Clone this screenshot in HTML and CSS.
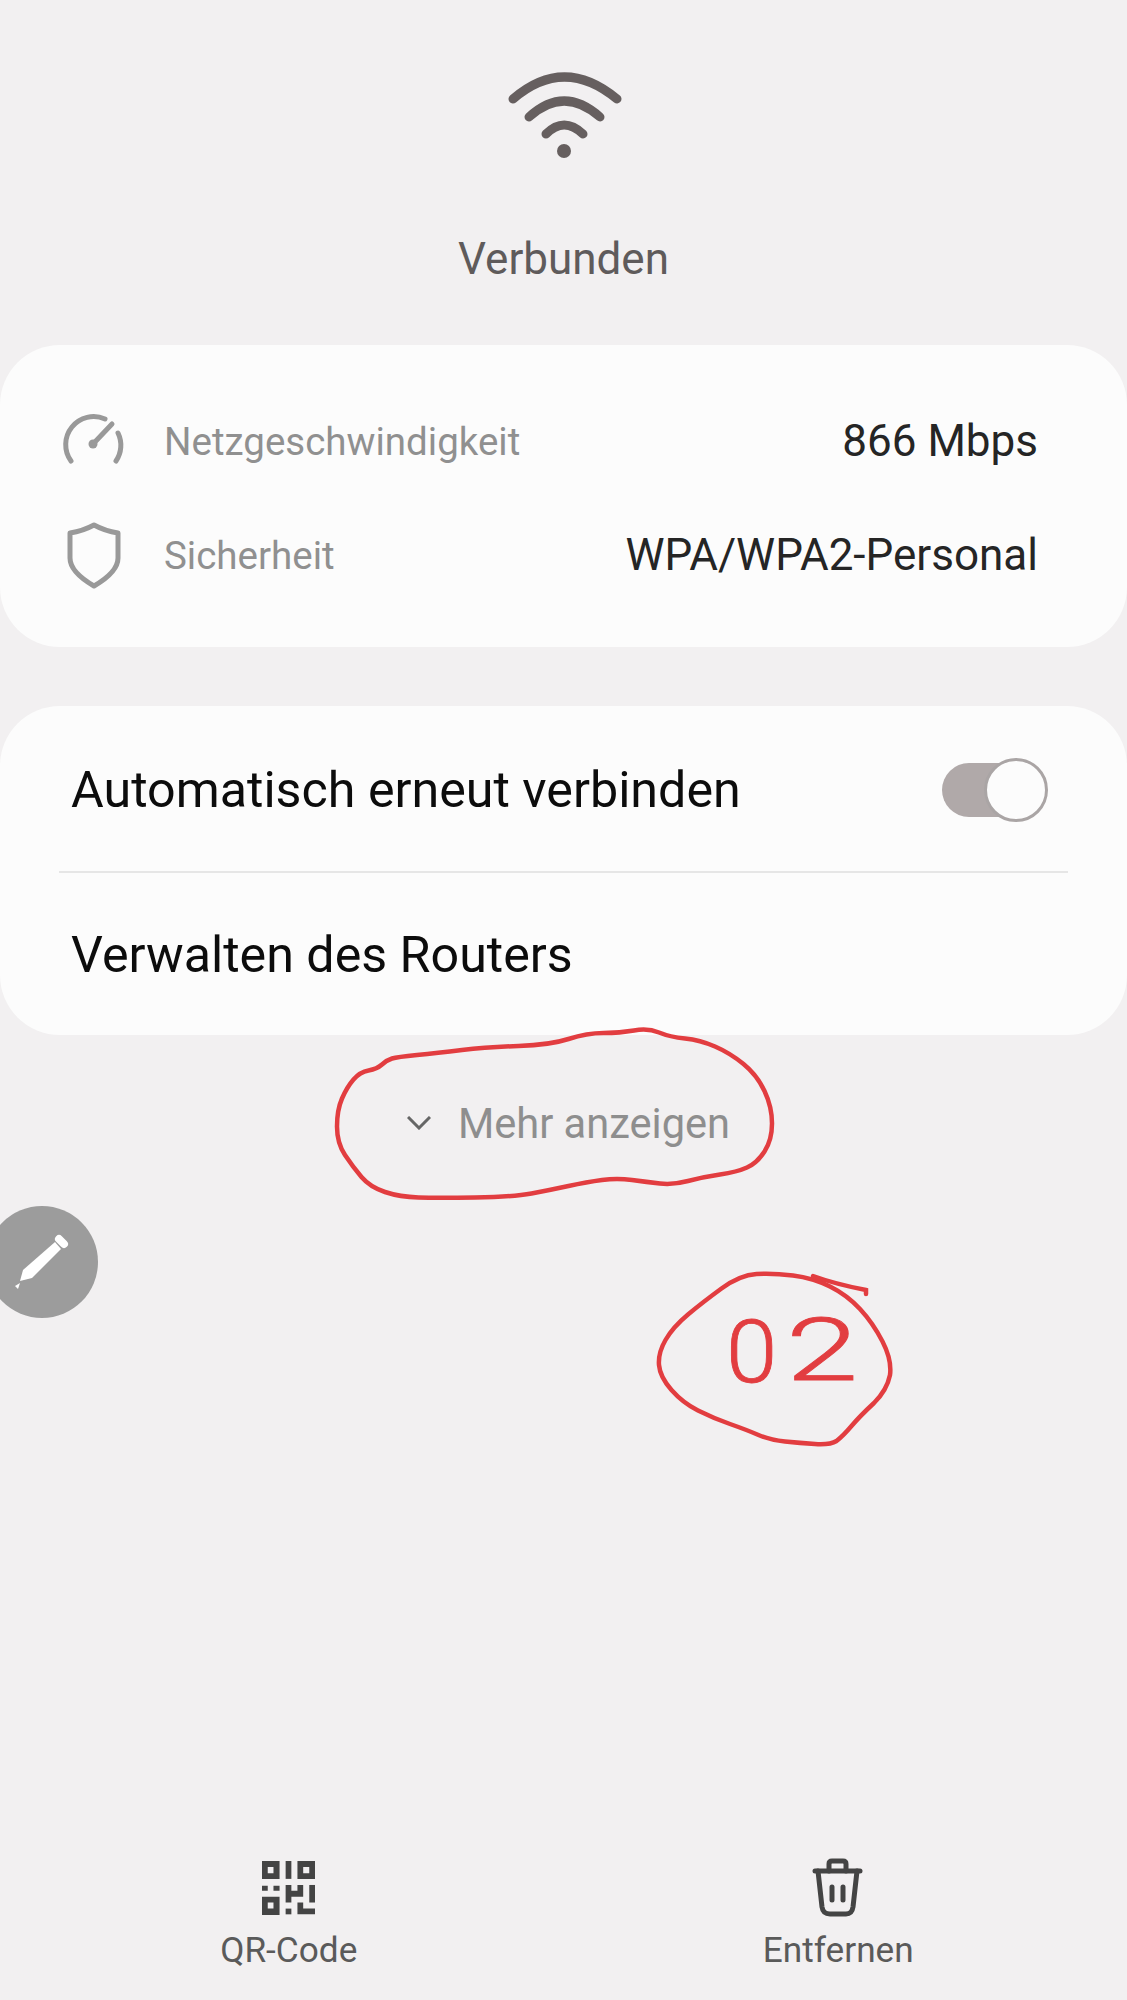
FILE: index.html
```html
<!DOCTYPE html>
<html lang="de">
    <head>
        <meta charset="utf-8">
        <title>Verbunden</title>
        <link rel="stylesheet" href="styles.css">
    </head>
    <body>
        <div class="page">
            <div class="status">
                <svg class="wifi" width="120" height="96" viewBox="503 66 120 96">
                    <path d="M512 99Q563 55 616 99"/>
                    <path d="M528 117Q563 85 599 117"/>
                    <path d="M545 134Q563 116 582 134"/>
                    <circle cx="563" cy="151" r="7"/>
                </svg>
                <div class="status-text">Verbunden</div>
            </div>

            <div class="card info">
                <div class="info-row">
                    <svg class="info-icon" width="72" height="64" viewBox="55 409 72 64">
                        <path d="M71 461A28 28 0 0 1 105 419"/>
                        <path d="M116 461A28 28 0 0 0 118 433"/>
                        <path d="M93 444L112 424"/>
                        <circle class="fill" cx="93" cy="444" r="4.5"/>
                    </svg>
                    <span class="info-label">Netzgeschwindigkeit</span>
                    <span class="info-value">866 Mbps</span>
                </div>
                <div class="info-row">
                    <svg class="info-icon" width="72" height="70" viewBox="55 518 72 70">
                        <path d="M70 531Q83 529 94 523Q105 529 118 531V556Q118 570 94 584Q70 570 70 556Z"/>
                    </svg>
                    <span class="info-label">Sicherheit</span>
                    <span class="info-value">WPA/WPA2-Personal</span>
                </div>
            </div>

            <div class="card options">
                <div class="option-row">
                    <span>Automatisch erneut verbinden</span>
                    <div class="toggle"><div class="knob"></div></div>
                </div>
                <div class="divider"></div>
                <div class="option-row">
                    <span>Verwalten des Routers</span>
                </div>
            </div>

            <div class="more">
                <svg class="chevron" width="24" height="14" viewBox="0 0 24 14">
                    <path d="M1 1L12 12L23 1"/>
                </svg>
                <span>Mehr anzeigen</span>
            </div>

            <div class="actions">
                <div class="action">
                    <svg width="53" height="54" viewBox="188 62 157 160">
                        <path fill-rule="evenodd" d="M188 62H240V115H188ZM205 80V98H222V80Z"/>
                        <path d="M258 62H275V115H258Z"/>
                        <path fill-rule="evenodd" d="M293 62H345V115H293ZM310 80V98H328V80Z"/>
                        <path d="M188 135H205V150H188ZM222 135H240V150H222Z"/>
                        <path fill-rule="evenodd" d="M188 168H240V222H188ZM205 185V203H222V185Z"/>
                        <path d="M258 133H275V150H293V133H310V168H275V185H258Z"/>
                        <path d="M328 133H345V185H328Z"/>
                        <path d="M258 203H275V220H258Z"/>
                        <path d="M293 185H310V203H345V220H293Z"/>
                    </svg>
                    <span>QR-Code</span>
                </div>
                <div class="action">
                    <svg class="trash" width="54" height="60" viewBox="811 1857 54 60">
                        <path d="M815 1870H860"/>
                        <path d="M829 1870V1863Q829 1860 832 1860H843Q846 1860 846 1863V1870"/>
                        <path d="M818 1870L822 1906Q823 1913 830 1913H846Q852 1913 853 1906L857 1870"/>
                        <path d="M832 1886V1899M843 1886V1899"/>
                    </svg>
                    <span>Entfernen</span>
                </div>
            </div>

            <div class="fab">
                <svg width="112" height="112" viewBox="-14 1206 112 112">
                    <path d="M20 1281L23 1270L55 1242L61 1249L32 1278Z"/>
                    <path d="M15 1286L20 1283L18 1289Z"/>
                    <path class="cap" d="M59 1239L64 1244"/>
                </svg>
            </div>

            <!-- red pen marks on top of the screenshot -->
            <svg class="marks" width="1127" height="2000" viewBox="0 0 1127 2000">
                <path d="M417 1055Q437 1053 462 1050Q487 1047 518.5 1046Q550 1045 568.5 1039Q587 1033 603.5 1033Q620 1033 634 1030.5Q648 1028 659 1032.5Q670 1037 685 1038.5Q700 1040 715 1046.5Q730 1053 743.5 1064Q757 1075 764.5 1091Q772 1107 772 1123.5Q772 1140 764.5 1151.5Q757 1163 747 1167.5Q737 1172 720 1174.5Q703 1177 688 1181Q673 1185 660 1183.5Q647 1182 632 1180Q617 1178 602 1180Q587 1182 568.5 1186Q550 1190 531.5 1193.5Q513 1197 475 1197.5Q437 1198 418.5 1197.5Q400 1197 385 1192Q370 1187 361.5 1177Q353 1167 345 1155Q337 1143 337 1126.5Q337 1110 342 1098.5Q347 1087 353.5 1079.5Q360 1072 368.5 1070.5Q377 1069 382 1064.5Q387 1060 392 1058.5Q397 1057 417 1055"/>
                <path d="M756.5 1274Q773 1273 793 1275.5Q813 1278 830 1286.5Q847 1295 860 1309Q873 1323 882.5 1341.5Q892 1360 890 1375Q887 1390 874 1403Q860 1416 851.5 1426Q843 1436 836.5 1441Q830 1445 815 1444Q800 1443 785 1441.5Q770 1440 758.5 1435Q747 1430 730 1424Q713 1418 698 1410.5Q683 1403 671.5 1390Q660 1377 659 1365Q658 1353 665.5 1340Q673 1327 688 1314.5Q703 1302 721.5 1288.5Q740 1275 756.5 1274"/>
                <path d="M813 1276Q835 1284 866 1290L866 1294"/>
                <text transform="translate(726 1382) scale(1.1 1.03)">0</text>
                <text transform="translate(786 1380) scale(1.55 1.03)">2</text>
            </svg>
        </div>
    </body>
</html>
```

FILE: styles.css
```css
html {
    background: #f2f0f1;
}
body {
    margin: 0;
    font-family: Roboto, "Liberation Sans", sans-serif;
}
.page {
    position: relative;
    display: flex;
    flex-direction: column;
    height: 2000px;
    overflow: hidden;
}

.status {
    flex: none;
    display: flex;
    flex-direction: column;
    align-items: center;
    padding-top: 66px;
    height: 345px;
    box-sizing: border-box;
}
.wifi {
    display: block;
}
.wifi path {
    fill: none;
    stroke: #665f5f;
    stroke-width: 9;
    stroke-linecap: round;
}
.wifi circle {
    fill: #665f5f;
}
.status-text {
    margin-top: 72px;
    font-size: 44px;
    line-height: 50px;
    color: #5f5b5b;
}

.card {
    flex: none;
    background: #fcfcfc;
    border-radius: 60px;
}
.info {
    height: 302px;
    box-sizing: border-box;
    padding: 39px 89px 0 55px;
    margin-bottom: 59px;
}
.info-row {
    display: flex;
    align-items: center;
    height: 114px;
}
.info-icon {
    flex: none;
    display: block;
}
.info-icon path {
    fill: none;
    stroke: #999;
    stroke-width: 5;
    stroke-linecap: round;
    stroke-linejoin: round;
}
.info-icon .fill {
    fill: #999;
}
.info-label {
    margin-left: 37px;
    font-size: 38.5px;
    color: #909090;
}
.info-value {
    margin-left: auto;
    font-size: 44px;
    color: #252525;
}

.options {
    height: 329px;
    box-sizing: border-box;
    padding-top: 2px;
}
.option-row {
    display: flex;
    align-items: center;
    justify-content: space-between;
    height: 163px;
    padding: 0 93px 0 71px;
    font-size: 50.2px;
    color: #0c0c0c;
}
.divider {
    height: 2px;
    margin: 0 59px;
    background: #e6e6e6;
}
.toggle {
    position: relative;
    width: 92px;
    height: 54px;
    border-radius: 27px;
    background: #b0a9a9;
}
.knob {
    position: absolute;
    top: -5px;
    right: -14px;
    width: 58px;
    height: 58px;
    border: 3px solid #aaa5a5;
    border-radius: 50%;
    background: #fcfcfc;
}

.more {
    flex: none;
    display: flex;
    align-items: center;
    justify-content: center;
    height: 176px;
    padding-left: 10px;
    gap: 27px;
    font-size: 41.6px;
    color: #8e8e8e;
}
.chevron {
    display: block;
}
.chevron path {
    fill: none;
    stroke: #666;
    stroke-width: 3;
}

.actions {
    display: grid;
    grid-template-columns: 1fr 1fr;
    margin-top: auto;
    padding: 0 14px;
    height: 142px;
    box-sizing: border-box;
}
.action {
    display: flex;
    flex-direction: column;
    align-items: center;
    font-size: 35.2px;
    line-height: 40px;
    color: #5a5a5a;
}
.action svg {
    display: block;
    height: 60px;
    margin-bottom: 12px;
    fill: #444;
}
.trash path {
    fill: none;
    stroke: #444;
    stroke-width: 5;
    stroke-linecap: round;
    stroke-linejoin: round;
}

.fab {
    position: absolute;
    left: -14px;
    top: 1206px;
    width: 112px;
    height: 112px;
    border-radius: 50%;
    background: #9c9c9c;
}
.fab svg {
    display: block;
    fill: #fff;
}
.fab .cap {
    stroke: #fff;
    stroke-width: 8;
    stroke-linecap: round;
}

.marks {
    position: absolute;
    left: 0;
    top: 0;
    pointer-events: none;
}
.marks path {
    fill: none;
    stroke: #e23d40;
    stroke-width: 4.5;
    stroke-linecap: round;
}
.marks text {
    font-family: Roboto, sans-serif;
    font-weight: 300;
    font-size: 84px;
    fill: #e23d40;
    stroke: #e23d40;
    stroke-width: 0.8;
}
```
